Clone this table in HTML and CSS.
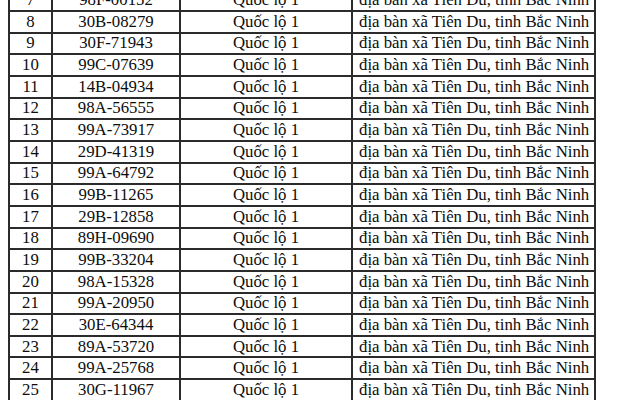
FILE: index.html
```html
<!DOCTYPE html>
<html lang="vi">
<head>
<meta charset="utf-8">
<link rel="stylesheet" href="styles.css">
</head>
<body>
<div class="sheet">
<table class="list">
<colgroup><col class="c1"><col class="c2"><col class="c3"><col class="c4"></colgroup>
<tbody>
<tr><td>7</td><td>98F-00152</td><td>Quốc lộ 1</td><td class="place">địa bàn xã Tiên Du, tinh Bắc Ninh</td></tr>
<tr><td>8</td><td>30B-08279</td><td>Quốc lộ 1</td><td class="place">địa bàn xã Tiên Du, tinh Bắc Ninh</td></tr>
<tr><td>9</td><td>30F-71943</td><td>Quốc lộ 1</td><td class="place">địa bàn xã Tiên Du, tinh Bắc Ninh</td></tr>
<tr><td>10</td><td>99C-07639</td><td>Quốc lộ 1</td><td class="place">địa bàn xã Tiên Du, tinh Bắc Ninh</td></tr>
<tr><td>11</td><td>14B-04934</td><td>Quốc lộ 1</td><td class="place">địa bàn xã Tiên Du, tinh Bắc Ninh</td></tr>
<tr><td>12</td><td>98A-56555</td><td>Quốc lộ 1</td><td class="place">địa bàn xã Tiên Du, tinh Bắc Ninh</td></tr>
<tr><td>13</td><td>99A-73917</td><td>Quốc lộ 1</td><td class="place">địa bàn xã Tiên Du, tinh Bắc Ninh</td></tr>
<tr><td>14</td><td>29D-41319</td><td>Quốc lộ 1</td><td class="place">địa bàn xã Tiên Du, tinh Bắc Ninh</td></tr>
<tr><td>15</td><td>99A-64792</td><td>Quốc lộ 1</td><td class="place">địa bàn xã Tiên Du, tinh Bắc Ninh</td></tr>
<tr><td>16</td><td>99B-11265</td><td>Quốc lộ 1</td><td class="place">địa bàn xã Tiên Du, tinh Bắc Ninh</td></tr>
<tr><td>17</td><td>29B-12858</td><td>Quốc lộ 1</td><td class="place">địa bàn xã Tiên Du, tinh Bắc Ninh</td></tr>
<tr><td>18</td><td>89H-09690</td><td>Quốc lộ 1</td><td class="place">địa bàn xã Tiên Du, tinh Bắc Ninh</td></tr>
<tr><td>19</td><td>99B-33204</td><td>Quốc lộ 1</td><td class="place">địa bàn xã Tiên Du, tinh Bắc Ninh</td></tr>
<tr><td>20</td><td>98A-15328</td><td>Quốc lộ 1</td><td class="place">địa bàn xã Tiên Du, tinh Bắc Ninh</td></tr>
<tr><td>21</td><td>99A-20950</td><td>Quốc lộ 1</td><td class="place">địa bàn xã Tiên Du, tinh Bắc Ninh</td></tr>
<tr><td>22</td><td>30E-64344</td><td>Quốc lộ 1</td><td class="place">địa bàn xã Tiên Du, tinh Bắc Ninh</td></tr>
<tr><td>23</td><td>89A-53720</td><td>Quốc lộ 1</td><td class="place">địa bàn xã Tiên Du, tinh Bắc Ninh</td></tr>
<tr><td>24</td><td>99A-25768</td><td>Quốc lộ 1</td><td class="place">địa bàn xã Tiên Du, tinh Bắc Ninh</td></tr>
<tr><td>25</td><td>30G-11967</td><td>Quốc lộ 1</td><td class="place">địa bàn xã Tiên Du, tinh Bắc Ninh</td></tr>
</tbody>
</table>
</div>
</body>
</html>
```
FILE: styles.css
```css
html, body {
  margin: 0;
  padding: 0;
  background: #fff;
}
.sheet {
  width: 640px;
  height: 400px;
  overflow: hidden;
  padding-left: 8px;
  box-sizing: border-box;
}
.list {
  border-collapse: collapse;
  table-layout: fixed;
  width: 586px;
  margin-top: -11.7px;
  font-family: "Liberation Serif", "Times New Roman", serif;
  font-size: 16.8px;
  color: #0d0d0d;
}
.c1 { width: 43px; }
.c2 { width: 128px; }
.c3 { width: 172px; }
.c4 { width: 243px; }
.list td {
  border: 2px solid #2b2b2b;
  height: 21.67px;
  padding: 0;
  text-align: center;
  line-height: 18px;
  box-sizing: border-box;
  white-space: nowrap;
}
.list td.place {
  text-align: left;
  padding-left: 6px;
}
```
